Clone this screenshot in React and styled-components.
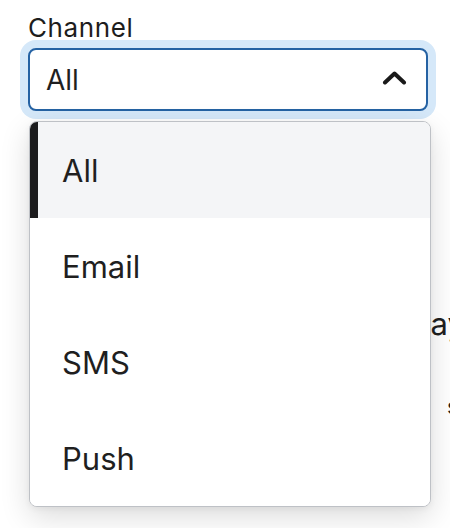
import React from "react";
import styled, { createGlobalStyle } from "styled-components";

const GlobalStyle = createGlobalStyle`
  html, body {
    margin: 0;
    padding: 0;
    background: #ffffff;
    overflow: hidden;
  }
  body {
    font-family: Inter, "Noto Sans", "Liberation Sans", sans-serif;
    color: #1f1f1f;
  }
`;

const Page = styled.div`
  width: 450px;
  height: 528px;
  padding: 13px 0 0 28px;
  box-sizing: border-box;
`;

const Field = styled.div`
  position: relative;
  width: 400px;
  display: flex;
  flex-direction: column;
  gap: 5px;
`;

const Label = styled.label`
  font-size: 26px;
  line-height: 30px;
  letter-spacing: 0.6px;
  color: #1d1d1d;
`;

const SelectBox = styled.button`
  display: flex;
  align-items: center;
  justify-content: space-between;
  box-sizing: border-box;
  width: 400px;
  height: 63px;
  padding: 0 19px 0 16px;
  background: #ffffff;
  border: 2px solid #2562a3;
  border-radius: 8px;
  box-shadow: 0 0 0 8px #d5e8f9;
  font-family: inherit;
  font-size: 28px;
  color: #1f1f1f;
  cursor: pointer;
  outline: none;
`;

const Chevron = styled.svg`
  width: 25px;
  height: 14px;
  flex: none;
  margin-top: -4px;
`;

const Menu = styled.ul`
  position: absolute;
  top: calc(100% + 10px);
  left: 1px;
  width: 402px;
  margin: 0;
  padding: 0;
  list-style: none;
  box-sizing: border-box;
  background: #ffffff;
  border: 1px solid #bec1c6;
  border-radius: 8px;
  overflow: hidden;
  box-shadow: 0 10px 30px rgba(0, 0, 0, 0.14), 0 2px 6px rgba(0, 0, 0, 0.05);
  z-index: 2;
`;

const Option = styled.li`
  display: flex;
  align-items: center;
  height: 96px;
  padding-left: 32px;
  font-size: 31px;
  color: #1f1f1f;
  background: ${(p) => (p.$active ? "#f4f5f7" : "#ffffff")};
  box-shadow: ${(p) => (p.$active ? "inset 8px 0 0 #1c1c1e" : "none")};
`;

const Behind = styled.div`
  display: flex;
  flex-direction: column;
  margin-top: 194px;
  white-space: nowrap;
`;

const BehindRow = styled.div`
  display: flex;
  justify-content: ${(p) => (p.$end ? "flex-end" : "flex-start")};
  width: ${(p) => p.$width}px;
  padding-left: ${(p) => p.$indent || 0}px;
  margin-top: ${(p) => p.$gap || 0}px;
  font-size: ${(p) => p.$size}px;
  line-height: ${(p) => Math.round(p.$size * 1.22)}px;
  color: #1f1f1f;
`;

const options = ["All", "Email", "SMS", "Push"];

export default function App() {
  return (
    <>
      <GlobalStyle />
      <Page>
        <Field>
          <Label>Channel</Label>
          <SelectBox type="button" aria-expanded="true">
            <span>All</span>
            <Chevron viewBox="0 0 25 14" fill="none">
              <polyline
                points="3,11.5 12.5,2.5 22,11.5"
                stroke="#1a1a1a"
                strokeWidth="4"
                strokeLinecap="round"
                strokeLinejoin="round"
              />
            </Chevron>
          </SelectBox>
          <Menu role="listbox">
            {options.map((o, i) => (
              <Option key={o} $active={i === 0} role="option" aria-selected={i === 0}>
                {o}
              </Option>
            ))}
          </Menu>
        </Field>
        <Behind>
          <BehindRow $end $width={437} $size={31}>
            Today
          </BehindRow>
          <BehindRow $width={460} $indent={419} $size={22} $gap={50}>
            settings
          </BehindRow>
        </Behind>
      </Page>
    </>
  );
}
